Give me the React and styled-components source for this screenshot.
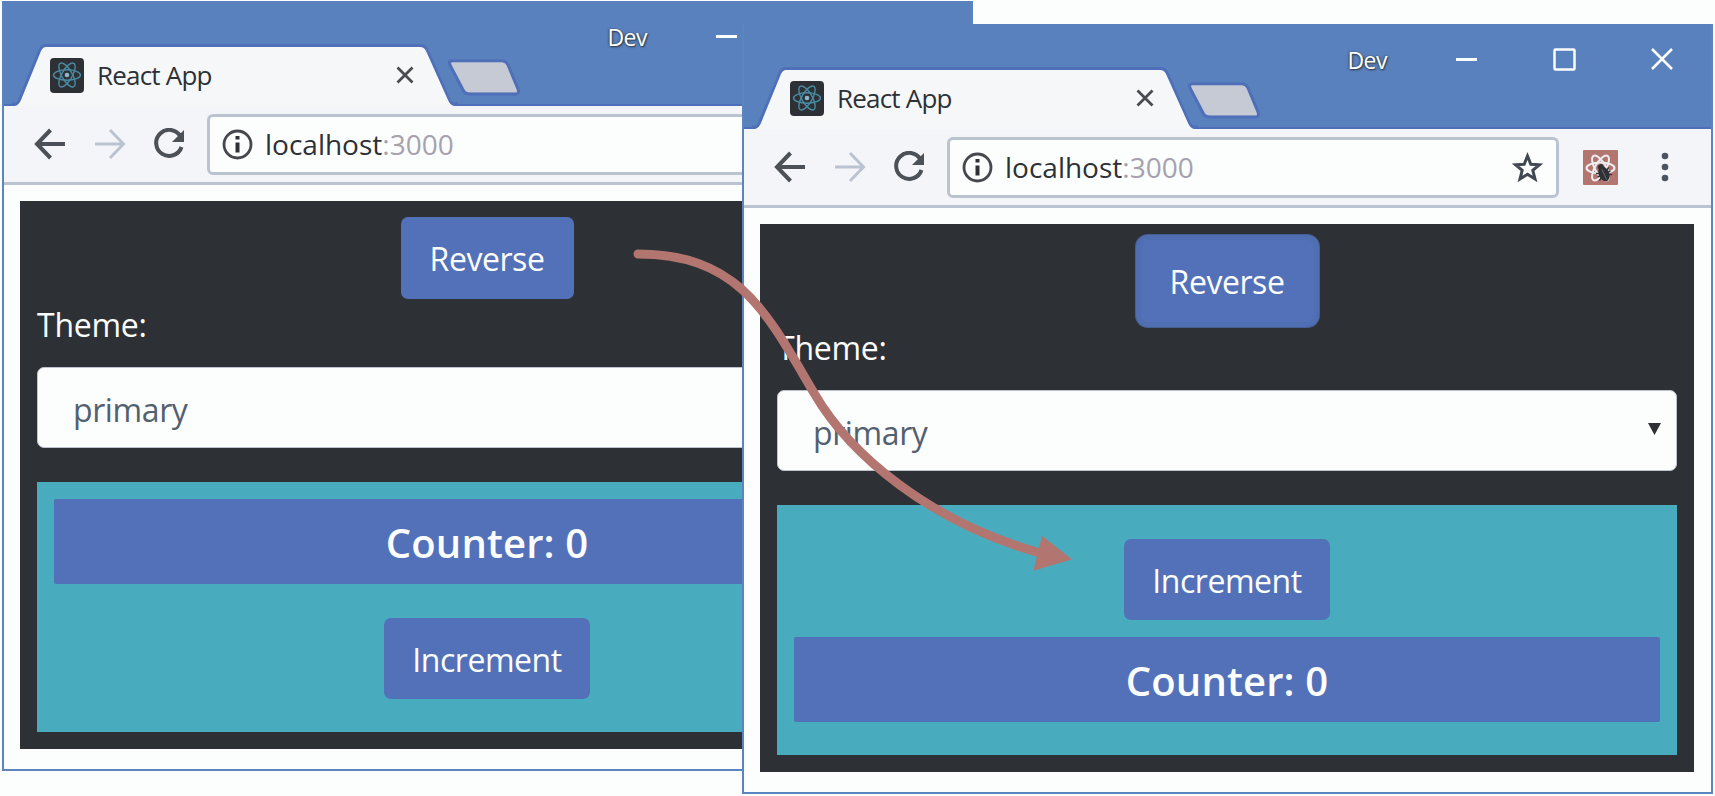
import React from 'react';
import styled, { createGlobalStyle } from 'styled-components';

const blue = '#5371b8';
const ink = '#2d3135';
const line = '#bcc3d0';
const paper = '#fcfdfd';

const GlobalStyle = createGlobalStyle`
  * { box-sizing: border-box; }
  html, body { margin: 0; background: ${paper}; }
  body { font-family: "Open Sans", "Noto Sans", sans-serif; color: ${ink}; }
  svg { display: block; flex: none; }
`;

const Desktop = styled.main`
  position: relative;
  width: 1715px;
  height: 796px;
  overflow: hidden;
  background: ${paper};
`;

const BrowserFrame = styled.section`
  position: absolute;
  left: ${(p) => p.$x}px;
  top: ${(p) => p.$y}px;
  width: 971px;
  height: 770px;
  border: 2px solid #5b85be;
  border-top: 0;
  background: ${paper};
  display: flex;
  flex-direction: column;
`;

const TitleBar = styled.header`
  height: 105px;
  flex: none;
  display: flex;
  align-items: flex-end;
  background: #5981bd;
  border-bottom: 2px solid #4f6fb8;
`;

const Tab = styled.div`
  position: relative;
  width: 446px;
  height: 62px;
  margin: 0 0 -2px 8px;
  padding: 0 44px 0 38px;
  display: flex;
  align-items: center;
`;

const TabShape = styled.svg`
  position: absolute;
  inset: 0;
`;

const Favicon = styled.span`
  position: relative;
  width: 34px;
  height: 35px;
  border-radius: 4px;
  background: ${ink};
  display: grid;
  place-items: center;
`;

const TabTitle = styled.span`
  position: relative;
  margin-left: 13px;
  font-size: 26px;
  letter-spacing: -0.8px;
  line-height: 34px;
  flex: 1;
`;

const TabClose = styled.svg`
  position: relative;
`;

const NewTab = styled.svg`
  margin: 0 0 7px -12px;
`;

const Controls = styled.div`
  align-self: flex-start;
  margin: 20px 38px 0 auto;
  height: 30px;
  display: flex;
  align-items: center;
`;

const Profile = styled.span`
  color: ${paper};
  font-size: 23px;
  line-height: 30px;
  letter-spacing: -0.5px;
  margin: 2px 69px 0 0;
  text-shadow: 1px 1px 2px #2d3135, -1px 0 2px #43536d;
`;

const Control = styled.svg`
  margin-left: ${(p) => p.$gap || 0}px;
`;

const Toolbar = styled.nav`
  height: 79px;
  flex: none;
  padding: 0 42px 0 30px;
  display: flex;
  align-items: center;
  background: #f3f5f8;
  border-bottom: 3px solid ${line};
`;

const NavIcon = styled.svg`
  margin-right: ${(p) => p.$after}px;
`;

const AddressBar = styled.div`
  width: 613px;
  height: 61px;
  padding: 0 13px 0 12px;
  border: 3px solid ${line};
  border-radius: 6px;
  background: ${paper};
  display: flex;
  align-items: center;
`;

const Url = styled.span`
  flex: 1;
  margin-left: 12px;
  font-size: 28px;
  line-height: 36px;
  letter-spacing: 0;
  white-space: nowrap;
`;

const Port = styled.span`
  color: #a5a2ae;
`;

const Extension = styled.span`
  width: 35px;
  height: 35px;
  margin: 0 43px 0 24px;
  background: #b37570;
  border-radius: 1px;
`;

const Viewport = styled.div`
  padding: 16px 17px 0 16px;
`;

const AppPanel = styled.div`
  height: 548px;
  padding: 16px 17px;
  background: ${ink};
  display: flex;
  flex-direction: column;
  color: ${paper};
`;

const Button = styled.button`
  align-self: center;
  flex: none;
  width: ${(p) => p.$width}px;
  height: ${(p) => p.$height || 82}px;
  padding: 2px 0 0;
  border: 0;
  border-radius: 7px;
  background: ${blue};
  color: ${paper};
  font: 400 32px/40px "Open Sans", "Noto Sans", sans-serif;
  letter-spacing: -0.45px;
  box-shadow: ${(p) => (p.$focused ? '0 0 0 5px #506eb2, 0 0 0 6px #465f93' : 'none')};
`;

const Label = styled.label`
  height: 68px;
  flex: none;
  padding-top: 4px;
  font-size: 32px;
  line-height: 44px;
  letter-spacing: -0.25px;
`;

const SelectBox = styled.div`
  height: 81px;
  flex: none;
  padding: 4px 15px 0 35px;
  border: 1px solid #bfc3cf;
  border-radius: 7px;
  background: ${paper};
  display: flex;
  align-items: center;
  justify-content: space-between;
  color: #53606f;
  font-size: 32px;
  letter-spacing: -0.4px;
  line-height: 44px;
`;

const Caret = styled.svg`
  margin-bottom: 7px;
`;

const CounterPanel = styled.div`
  height: 250px;
  flex: none;
  margin-top: 34px;
  padding: ${(p) => (p.$reversed ? '34px' : '17px')} 17px 0;
  background: #48acbe;
  display: flex;
  flex-direction: column;
  gap: ${(p) => (p.$reversed ? 17 : 34)}px;
`;

const CounterBar = styled.h1`
  margin: 0;
  height: 85px;
  border-radius: 2px;
  background: ${blue};
  font-size: 40px;
  font-weight: 600;
  line-height: 88px;
  letter-spacing: 0.15px;
  text-align: center;
`;

const ArrowLayer = styled.svg`
  position: absolute;
  left: 0;
  top: 0;
  pointer-events: none;
`;

function Atom({ size, color, stroke }) {
  return (
    <svg width={size} height={size} viewBox="-15 -15 30 30" fill="none" stroke={color} strokeWidth={stroke}>
      <ellipse rx="13.5" ry="5.2" />
      <ellipse rx="13.5" ry="5.2" transform="rotate(60)" />
      <ellipse rx="13.5" ry="5.2" transform="rotate(120)" />
      <circle r="2.3" fill="#8fb6c8" stroke="none" />
    </svg>
  );
}

function ExtensionIcon() {
  return (
    <svg width="35" height="35" viewBox="0 0 35 35" fill="none">
      <g stroke="#eceef2" strokeWidth="2" transform="translate(17.5 18)">
        <ellipse rx="14" ry="5.4" />
        <ellipse rx="14" ry="5.4" transform="rotate(60)" />
        <ellipse rx="14" ry="5.4" transform="rotate(120)" />
      </g>
      <g transform="rotate(-25 21 24)">
        <path d="M14 20l14 8M14 28l14-8M14 24h14" stroke={ink} strokeWidth="1.4" />
        <ellipse cx="21" cy="24" rx="5.3" ry="7.6" fill={ink} />
        <circle cx="21" cy="16.5" r="3" fill={ink} />
        <path d="M21 19v11" stroke="#777078" strokeWidth="0.8" />
      </g>
    </svg>
  );
}

function BrowserWindow({ x, y, reversed }) {
  const counter = <CounterBar key="counter">Counter: 0</CounterBar>;
  const increment = (
    <Button key="increment" $width={206} $height={81}>Increment</Button>
  );
  return (
    <BrowserFrame $x={x} $y={y}>
      <TitleBar>
        <Tab>
          <TabShape width="446" height="62" viewBox="0 0 446 62">
            <path d="M0 60H3Q6 60 7.500 56L28 6Q30 1.500 34 1.500H409Q413 1.500 415 6L437 56Q438.500 60 442 60H446" fill="none" stroke="#4f6fb8" strokeWidth="3" />
            <path d="M3 62Q7 61 9 56L29 7Q31 3 34 3H408Q412 3 414 7L436 56Q438 61 442 62Z" fill="#f5f7f9" />
          </TabShape>
          <Favicon><Atom size={30} color="#4a8ba3" stroke={1.4} /></Favicon>
          <TabTitle>React App</TabTitle>
          <TabClose width="18" height="18" viewBox="0 0 18 18">
            <path d="M1.500 1.500L16.500 16.500M16.500 1.500L1.500 16.500" stroke="#4b4a50" strokeWidth="2.800" />
          </TabClose>
        </Tab>
        <NewTab width="76" height="40" viewBox="0 0 76 40">
          <path d="M6 4H56Q60 4 62 8L72 32Q74 37 69 37H24Q19 37 17 33L4 8Q2 4 6 4Z" fill={line} stroke="#4f6fb8" strokeWidth="3" />
          <path d="M6 5.500H56Q59 5.500 60 8L70 32Q71 35 68 35H24Q20 35 19 32L6 8Z" fill="#c5cad5" />
        </NewTab>
        <Controls>
          <Profile>Dev</Profile>
          <Control width="21" height="3" viewBox="0 0 21 3"><path d="M0 1.500H21" stroke={paper} strokeWidth="3" /></Control>
          <Control $gap={76} width="23" height="23" viewBox="0 0 23 23"><rect x="1.500" y="1.500" width="20" height="20" rx="1" fill="none" stroke={paper} strokeWidth="2.500" /></Control>
          <Control $gap={75} width="22" height="22" viewBox="0 0 22 22"><path d="M1 1L21 21M21 1L1 21" stroke={paper} strokeWidth="2.500" /></Control>
        </Controls>
      </TitleBar>

      <Toolbar>
        <NavIcon $after={29} width="32" height="32" viewBox="0 0 32 32">
          <path d="M31 16H4M16.500 2L3 16L16.500 30" fill="none" stroke="#4c5057" strokeWidth="4" />
        </NavIcon>
        <NavIcon $after={28} width="31" height="32" viewBox="0 0 31 32">
          <path d="M0 16H27M15 2L28.500 16L15 30" fill="none" stroke={line} strokeWidth="3" />
        </NavIcon>
        <NavIcon $after={22} width="31" height="32" viewBox="0 0 31 32">
          <path d="M26.500 8.500A13 13 0 1 0 27.500 19" fill="none" stroke="#4c5057" strokeWidth="4" />
          <path d="M30 2V14H18Z" fill="#4c5057" />
        </NavIcon>
        <AddressBar>
          <svg width="31" height="31" viewBox="0 0 31 31">
            <circle cx="15.500" cy="15.500" r="13.500" fill="none" stroke="#45484d" strokeWidth="2.800" />
            <path d="M15.500 7V10.500M15.500 13.500V23.500" stroke={ink} strokeWidth="4" />
          </svg>
          <Url>localhost<Port>:3000</Port></Url>
          <svg width="31" height="31" viewBox="0 0 31 31">
            <path d="M15.500 4L18.800 12.200L27.500 12.700L20.800 18.400L23 27L15.500 22.200L8 27L10.200 18.400L3.500 12.700L12.200 12.200Z" fill="none" stroke="#424852" strokeWidth="3" />
          </svg>
        </AddressBar>
        <Extension><ExtensionIcon /></Extension>
        <svg width="8" height="30" viewBox="0 0 8 30" fill="#4c555f">
          <circle cx="4" cy="4" r="3.300" />
          <circle cx="4" cy="15" r="3.300" />
          <circle cx="4" cy="26" r="3.300" />
        </svg>
      </Toolbar>

      <Viewport>
        <AppPanel>
          <Button $width={173} $focused={reversed}>Reverse</Button>
          <Label>Theme:</Label>
          <SelectBox>
            primary
            <Caret width="13" height="12" viewBox="0 0 13 12"><path d="M0 0H13L6.500 12Z" fill={ink} /></Caret>
          </SelectBox>
          <CounterPanel $reversed={reversed}>
            {reversed ? [increment, counter] : [counter, increment]}
          </CounterPanel>
        </AppPanel>
      </Viewport>
    </BrowserFrame>
  );
}

export default function App() {
  return (
    <>
      <GlobalStyle />
      <Desktop>
        <BrowserWindow x={2} y={1} reversed={false} />
        <BrowserWindow x={742} y={24} reversed />
        <ArrowLayer width="1715" height="796" viewBox="0 0 1715 796">
          <path d="M638 254C740 254 768 315 814 393C850 455 930 522 1040 553" fill="none" stroke="#b37570" strokeWidth="9" strokeLinecap="round" />
          <path d="M1042.500 537L1070.500 559L1034.500 569.500Z" fill="#b37570" stroke="#b37570" strokeWidth="1.500" strokeLinejoin="round" />
        </ArrowLayer>
      </Desktop>
    </>
  );
}
